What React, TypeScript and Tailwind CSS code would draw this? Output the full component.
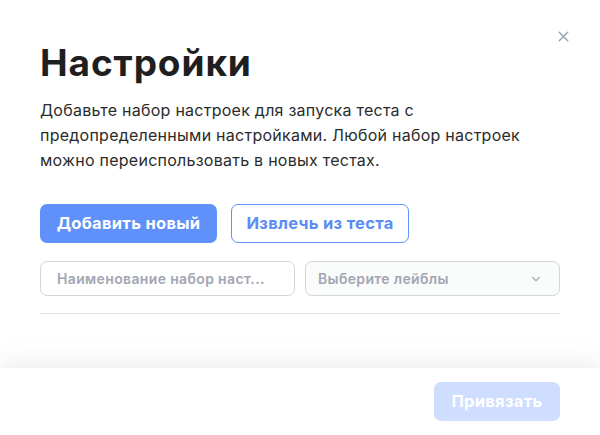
import { ChevronDown, X } from 'lucide-react';

export default function App() {
  return (
    <div className="flex h-[435px] w-[600px] flex-col overflow-hidden bg-white font-['Inter',sans-serif]">
      <div className="relative flex-1 px-10 pt-[40px]">
        <button className="absolute right-[28px] top-[28px] text-[#9aa3b5]">
          <X size={17} strokeWidth={2} />
        </button>
        <h1 className="text-[37px] font-bold leading-[46px] tracking-[0.9px] text-[#1f1f1f]">Настройки</h1>
        <p className="mt-[12px] text-[16px] leading-[25px] tracking-[0.25px] text-[#2b2b2b]">
          Добавьте набор настроек для запуска теста с предопределенными настройками. Любой набор настроек можно переиспользовать в новых тестах.
        </p>
        <div className="mt-[31px] flex gap-[14px]">
          <button className="h-[39px] w-[177px] rounded-[7px] bg-[#6090fa] text-[16.5px] font-bold tracking-[0.3px] text-white">Добавить новый</button>
          <button className="h-[39px] w-[178px] rounded-[7px] border border-[#6090fa] bg-white text-[16.5px] font-bold tracking-[0.3px] text-[#5b8cf5]">Извлечь из теста</button>
        </div>
        <div className="mt-[18px] flex gap-[10px]">
          <div className="flex h-[35px] w-[255px] items-center truncate rounded-[7px] border border-[#d3d5de] px-4 text-[14px] font-semibold tracking-[0.35px] text-[#a2a6b2]">
            Наименование набор наст...
          </div>
          <div className="flex h-[35px] flex-1 items-center justify-between rounded-[7px] border border-[#d3d5de] bg-[#fafbfb] pl-3 pr-4 text-[14px] font-semibold tracking-[0.35px] text-[#a2a6b2]">
            <span>Выберите лейблы</span>
            <ChevronDown size={14} strokeWidth={2} className="text-[#a9aeb9]" />
          </div>
        </div>
        <div className="mt-[17px] h-px bg-[#dfe1e6]" />
      </div>
      <div className="flex h-[67px] justify-end bg-white px-10 pt-[14px] shadow-[0_-8px_22px_rgba(120,130,150,0.12)]">
        <button className="h-[39px] w-[126px] rounded-[7px] bg-[#cfdefe] text-[16.5px] font-bold tracking-[0.3px] text-white">Привязать</button>
      </div>
    </div>
  );
}
